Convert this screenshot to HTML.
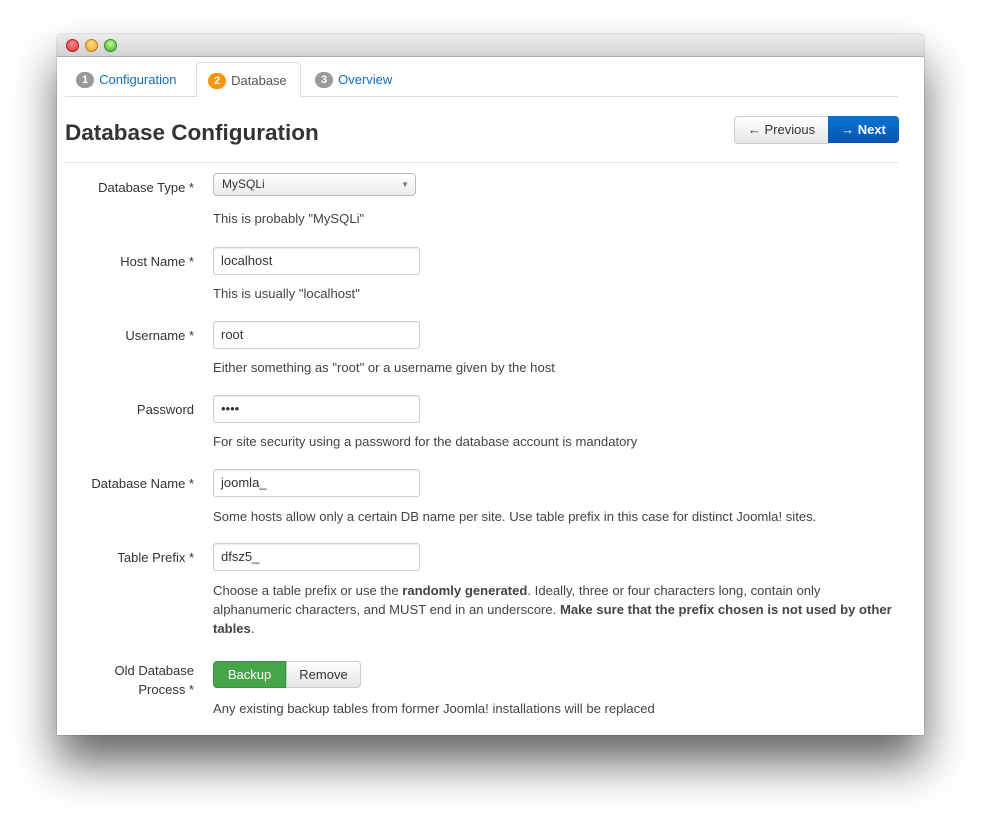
<!DOCTYPE html>
<html><head><meta charset="utf-8"><style>
body{margin:0;width:981px;height:814px;background:#fff;position:relative;overflow:hidden;font-family:"Liberation Sans",Arial,sans-serif;font-size:13px;color:#333}
.win{position:absolute;left:57px;top:34px;width:867px;height:701px;background:#fff;box-shadow:0 28px 45px rgba(0,0,0,.6),0 0 1px rgba(0,0,0,.6);border-radius:4px 4px 0 0}
.tb{position:absolute;left:0;top:0;width:867px;height:22px;background:linear-gradient(#ececec,#d2d2d2);border-bottom:1px solid #aaa;border-radius:4px 4px 0 0}
.dot{position:absolute;top:5px;width:11px;height:11px;border-radius:50%}
.a{position:absolute}
.tabs{position:absolute;left:65px;top:62px;width:833px;height:34px;border-bottom:1px solid #ddd}
.tab{position:absolute;top:0;height:34px;line-height:36px;color:#0e6fbf;font-size:13px}
.badge{display:inline-block;background:#999;color:#fff;border-radius:9px;padding:0 6px;height:16px;line-height:17px;font-size:11px;font-weight:bold;margin-right:5px;vertical-align:1px}
.lbl{position:absolute;right:787px;text-align:right;font-size:13px;color:#333}
.inp{position:absolute;left:213px;border:1px solid #ccc;border-radius:3px;box-shadow:inset 0 1px 1px rgba(0,0,0,.075);line-height:26px;padding-left:7px;box-sizing:border-box;width:207px;height:28px}
.help{position:absolute;left:213px;color:#444;font-size:13.1px}
</style></head><body>
<div class="win">
<div class="tb">
<div class="dot" style="left:9px;background:radial-gradient(circle at 50% 35%,#f88,#d33);border:1px solid #a22"></div>
<div class="dot" style="left:28px;background:radial-gradient(circle at 50% 35%,#fd8,#e9a020);border:1px solid #b8801a"></div>
<div class="dot" style="left:47px;background:radial-gradient(circle at 50% 35%,#bf8,#4a3);border:1px solid #383"></div>
</div>
</div>
<div class="tabs">
<div class="tab" style="left:11px"><span class="badge">1</span>Configuration</div>
<div class="tab" style="left:131px;width:105px;height:35px;border:1px solid #ddd;border-bottom:none;border-radius:4px 4px 0 0;background:#fff;color:#555;padding-left:11px;box-sizing:border-box"><span class="badge" style="background:#f89406">2</span>Database</div>
<div class="tab" style="left:250px"><span class="badge">3</span>Overview</div>
</div>
<div class="a" style="left:65px;top:120px;font-size:22.5px;font-weight:bold;color:#333">Database Configuration</div>
<div class="a" style="left:734px;top:116px;width:93px;height:26px;border:1px solid #ccc;border-radius:4px 0 0 4px;background:linear-gradient(#fff,#e6e6e6);text-align:center;line-height:26px;font-size:13px;color:#333">&larr;&nbsp;Previous</div>
<div class="a" style="left:828px;top:116px;width:71px;height:27px;border-radius:0 4px 4px 0;background:linear-gradient(#0a74d0,#0555b5);text-align:center;line-height:27px;font-size:13px;color:#fff;font-weight:bold">&rarr;&nbsp;Next</div>
<div class="a" style="left:65px;top:162px;width:833px;height:1px;background:#e5e5e5"></div>

<div class="lbl" style="top:180px">Database Type *</div>
<div class="a" style="left:213px;top:173px;width:203px;height:23px;border:1px solid #bbb;border-radius:4px;background:linear-gradient(#fff,#ececec);box-sizing:border-box;line-height:21px;padding-left:8px;font-size:12px">MySQLi<span style="position:absolute;right:6px;top:0;font-size:8px;color:#777">&#9660;</span></div>
<div class="help" style="top:211px">This is probably "MySQLi"</div>

<div class="lbl" style="top:254px">Host Name *</div>
<div class="inp" style="top:247px">localhost</div>
<div class="help" style="top:286px">This is usually "localhost"</div>

<div class="lbl" style="top:328px">Username *</div>
<div class="inp" style="top:321px">root</div>
<div class="help" style="top:360px">Either something as "root" or a username given by the host</div>

<div class="lbl" style="top:402px">Password</div>
<div class="inp" style="top:395px">&bull;&bull;&bull;&bull;</div>
<div class="help" style="top:434px">For site security using a password for the database account is mandatory</div>

<div class="lbl" style="top:476px">Database Name *</div>
<div class="inp" style="top:469px">joomla_</div>
<div class="help" style="top:509px">Some hosts allow only a certain DB name per site. Use table prefix in this case for distinct Joomla! sites.</div>

<div class="lbl" style="top:550px">Table Prefix *</div>
<div class="inp" style="top:543px">dfsz5_</div>
<div class="help" style="top:581px;width:680px;line-height:19px">Choose a table prefix or use the <b>randomly generated</b>. Ideally, three or four characters long, contain only alphanumeric characters, and MUST end in an underscore. <b>Make sure that the prefix chosen is not used by other tables</b>.</div>

<div class="lbl" style="top:661px;line-height:19px">Old Database<br>Process *</div>
<div class="a" style="left:213px;top:661px;width:73px;height:27px;background:#46a546;border:1px solid #3d8f3d;border-radius:4px 0 0 4px;box-sizing:border-box;color:#fff;text-align:center;line-height:25px">Backup</div>
<div class="a" style="left:286px;top:661px;width:75px;height:27px;background:linear-gradient(#fff,#e6e6e6);border:1px solid #ccc;border-radius:0 4px 4px 0;box-sizing:border-box;text-align:center;line-height:25px">Remove</div>
<div class="help" style="top:701px">Any existing backup tables from former Joomla! installations will be replaced</div>
</body></html>
